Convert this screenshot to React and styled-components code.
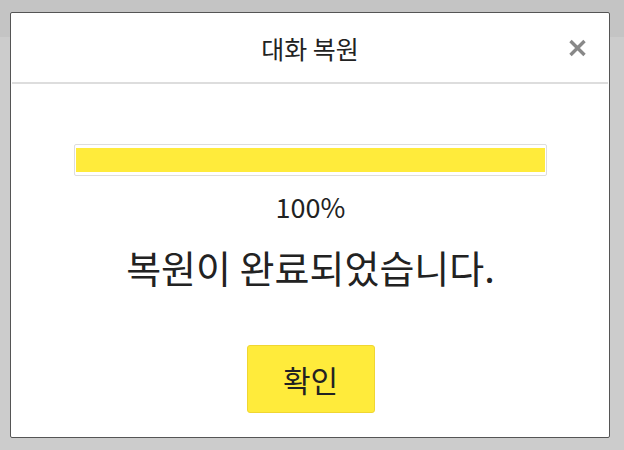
import React from 'react'
import styled, { createGlobalStyle } from 'styled-components'

const GlobalStyle = createGlobalStyle`
html, body {
    margin:0;
    padding:0;
    background:#cccccc;
    font-family:"Noto Sans CJK KR", "Noto Sans", sans-serif;
    color:#222;
}
`

const App = () => {
    const percent = 100
    return (
        <Page>
            <GlobalStyle />
            <TopBand />
            <Dialog>
                <Header>
                    <Title>대화 복원</Title>
                    <CloseButton aria-label='닫기'>
                        <svg width='19' height='18' viewBox='0 0 19 18'>
                            <path d='M2.5 2 L16.5 16 M16.5 2 L2.5 16' stroke='#888' strokeWidth='3.4' strokeLinecap='butt' />
                        </svg>
                    </CloseButton>
                </Header>
                <Divider />
                <Body>
                    <Progress>
                        <Bar style={{ width: `${percent}%` }} />
                    </Progress>
                    <Percent>{percent}%</Percent>
                    <Message>복원이 완료되었습니다.</Message>
                    <ConfirmButton>확인</ConfirmButton>
                </Body>
            </Dialog>
        </Page>
    )
}

export default App

const Page = styled.div`
position:relative;
width:624px;
height:450px;
overflow:hidden;
background:#cccccc;
`
const TopBand = styled.div`
height:37px;
background:#c4c4c4;
`
const Dialog = styled.div`
position:absolute;
top:12px;
left:10px;
width:598px;
height:424px;
border:1px solid #555;
border-radius:2px;
background:#fff;
display:flex;
flex-direction:column;
`
const Header = styled.div`
position:relative;
height:69px;
display:flex;
align-items:center;
justify-content:center;
`
const Title = styled.div`
font-size:25px;
line-height:32px;
`
const CloseButton = styled.button`
position:absolute;
right:22px;
top:26px;
width:19px;
height:18px;
padding:0;
border:none;
background:none;
display:flex;
cursor:pointer;
`
const Divider = styled.div`
height:2px;
margin:0 1px;
background:#dddddd;
`
const Body = styled.div`
padding:60px 62px 0 63px;
display:flex;
flex-direction:column;
align-items:center;
`
const Progress = styled.div`
align-self:stretch;
height:24px;
padding:3px 1px;
border:1px solid #dddddd;
border-radius:2px;
`
const Bar = styled.div`
height:100%;
background:#ffeb3b;
`
const Percent = styled.div`
margin-top:13px;
font-size:27px;
line-height:36px;
`
const Message = styled.div`
margin-top:20px;
font-size:38px;
line-height:44px;
`
const ConfirmButton = styled.button`
margin-top:56px;
width:128px;
height:68px;
border:1px solid #f0d632;
border-radius:3px;
background:#ffeb3b;
font-family:inherit;
font-size:30px;
color:#222;
cursor:pointer;
`
